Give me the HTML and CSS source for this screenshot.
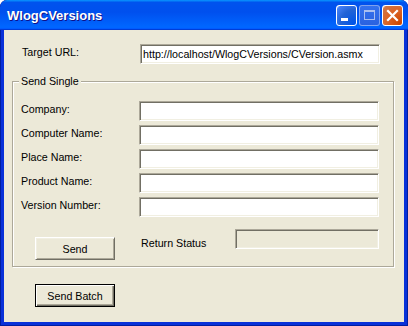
FILE: index.html
```html
<!DOCTYPE html>
<html lang="en">

<head>
    <meta charset="UTF-8">
    <title>WlogCVersions</title>
    <link rel="stylesheet" href="styles.css">
</head>

<body>
    <div class="window">
        <div class="titlebar">
            <span class="title">WlogCVersions</span>
            <div class="controls">
                <div class="ctl ctl-min">
                    <svg width="19" height="19" viewBox="0 0 19 19"><rect x="4" y="12" width="7" height="3" fill="#fff"/></svg>
                </div>
                <div class="ctl ctl-max">
                    <svg width="19" height="19" viewBox="0 0 19 19"><rect x="4.5" y="4.5" width="10" height="9" fill="none" stroke="#a9bff0" stroke-width="1"/><rect x="4" y="4" width="11" height="2" fill="#a9bff0"/></svg>
                </div>
                <div class="ctl ctl-close">
                    <svg width="19" height="19" viewBox="0 0 19 19"><path d="M5 5 L14 14 M14 5 L5 14" stroke="#fff" stroke-width="2.2" stroke-linecap="square"/></svg>
                </div>
            </div>
        </div>

        <div class="client">
            <div class="row url-row">
                <label class="label">Target URL:</label>
                <input class="field" type="text" value="http://localhost/WlogCVersions/CVersion.asmx">
            </div>

            <fieldset class="group">
                <legend>Send Single</legend>
                <div class="fields">
                    <div class="row"><label class="label">Company:</label><input class="field" type="text"></div>
                    <div class="row"><label class="label">Computer Name:</label><input class="field" type="text"></div>
                    <div class="row"><label class="label">Place Name:</label><input class="field" type="text"></div>
                    <div class="row"><label class="label">Product Name:</label><input class="field" type="text"></div>
                    <div class="row"><label class="label">Version Number:</label><input class="field" type="text"></div>
                </div>
                <div class="status-row">
                    <button class="btn btn-send">Send</button>
                    <span class="status-label">Return Status</span>
                    <div class="status-box"></div>
                </div>
            </fieldset>

            <button class="btn btn-default btn-batch">Send Batch</button>
        </div>
    </div>
</body>

</html>
```

FILE: styles.css
```css
/* Page */
body {
    margin: 0;
    font-family: 'Liberation Sans', Arial, sans-serif;
    font-size: 10.7px;
    color: #000;
}

/* Window frame */
.window {
    width: 408px;
    height: 326px;
    display: flex;
    flex-direction: column;
    background: #0831d9;
    border-radius: 7px 7px 0 0;
    overflow: hidden;
    box-shadow: inset 0 -1px #001ea0, inset 1px 0 #001ea0, inset -1px 0 #001ea0;
}

.titlebar {
    height: 30px;
    flex: none;
    display: flex;
    align-items: center;
    justify-content: space-between;
    padding: 0 5px 0 7px;
    background: linear-gradient(180deg, #0997ff, #0053ee 8%, #0050ee 40%, #06f 88%, #06f 93%, #005bff 95%, #003dd7 96%, #003dd7);
    border-radius: 7px 7px 0 0;
}

.title {
    font-family: 'Liberation Sans', Arial, sans-serif;
    font-weight: bold;
    font-size: 13px;
    color: #fff;
    text-shadow: 1px 1px #0f1089;
    margin-top: 1px;
}

.controls {
    display: flex;
    gap: 2px;
    margin-top: 1px;
}

.ctl {
    width: 21px;
    height: 21px;
    box-sizing: border-box;
    border: 1px solid #fff;
    border-radius: 3px;
    display: flex;
}

.ctl-min {
    background: radial-gradient(circle at 90% 90%, #0054e9 0%, #2263d5 55%, #4480f8 90%, #fff 100%);
}

.ctl-max {
    border-color: rgba(255, 255, 255, 0.4);
    background: linear-gradient(180deg, #3471ee, #2a62e0);
}

.ctl-close {
    background: radial-gradient(circle at 90% 90%, #cc4600 0%, #dc6527 55%, #cd7546 90%, #fff 100%);
}

/* Client area */
.client {
    flex: 1;
    margin: 0 4px 4px;
    background: #ece9d8;
    padding-top: 14px;
}

.row {
    display: flex;
    align-items: flex-start;
    height: 20px;
}

.url-row {
    padding-left: 18px;
}

.label {
    width: 118px;
    flex: none;
    line-height: 14px;
    margin-top: 1px;
}

.field {
    width: 240px;
    height: 20px;
    box-sizing: border-box;
    margin: 0;
    padding: 0 0 0 2px;
    font-family: 'Liberation Sans', Arial, sans-serif;
    font-size: 10.7px;
    color: #000;
    background: #fff;
    border: 1px solid;
    border-color: #aca899 #fff #fff #aca899;
    box-shadow: inset 1px 1px #716f64, inset -1px -1px #f1efe2;
    outline: none;
}

/* Group box */
.group {
    margin: 10px 0 0 8px;
    width: 382px;
    box-sizing: border-box;
    padding: 13px 8px 6px 8px;
    border: 1px solid #aca899;
    box-shadow: inset 1px 1px #fff, 1px 1px #fff;
}

.group legend {
    padding: 0 2px;
    margin-left: -2px;
    line-height: 14px;
    background: #ece9d8;
}

.fields {
    display: flex;
    flex-direction: column;
    gap: 4px;
}

.status-row {
    display: flex;
    align-items: flex-start;
    margin-top: 12px;
}

.status-label {
    margin: 7px 0 0 26px;
    line-height: 14px;
    width: 94px;
}

.status-box {
    width: 144px;
    height: 20px;
    box-sizing: border-box;
    border: 1px solid;
    border-color: #aca899 #fff #fff #aca899;
    box-shadow: inset 1px 1px #716f64, inset -1px -1px #f1efe2;
}

/* Buttons */
.btn {
    width: 80px;
    height: 23px;
    padding: 0;
    font-family: 'Liberation Sans', Arial, sans-serif;
    font-size: 10.7px;
    color: #000;
    background: #ece9d8;
    border: 1px solid;
    border-color: #fff #716f64 #716f64 #fff;
    box-shadow: inset 1px 1px #f1efe2, inset -1px -1px #aca899;
}

.btn-send {
    margin: 8px 0 0 14px;
}

.btn-default {
    border: 1px solid #000;
    box-shadow: inset 1px 1px #fff, inset -1px -1px #716f64, inset -2px -2px #aca899;
}

.btn-batch {
    display: block;
    margin: 17px 0 0 31px;
}
```
